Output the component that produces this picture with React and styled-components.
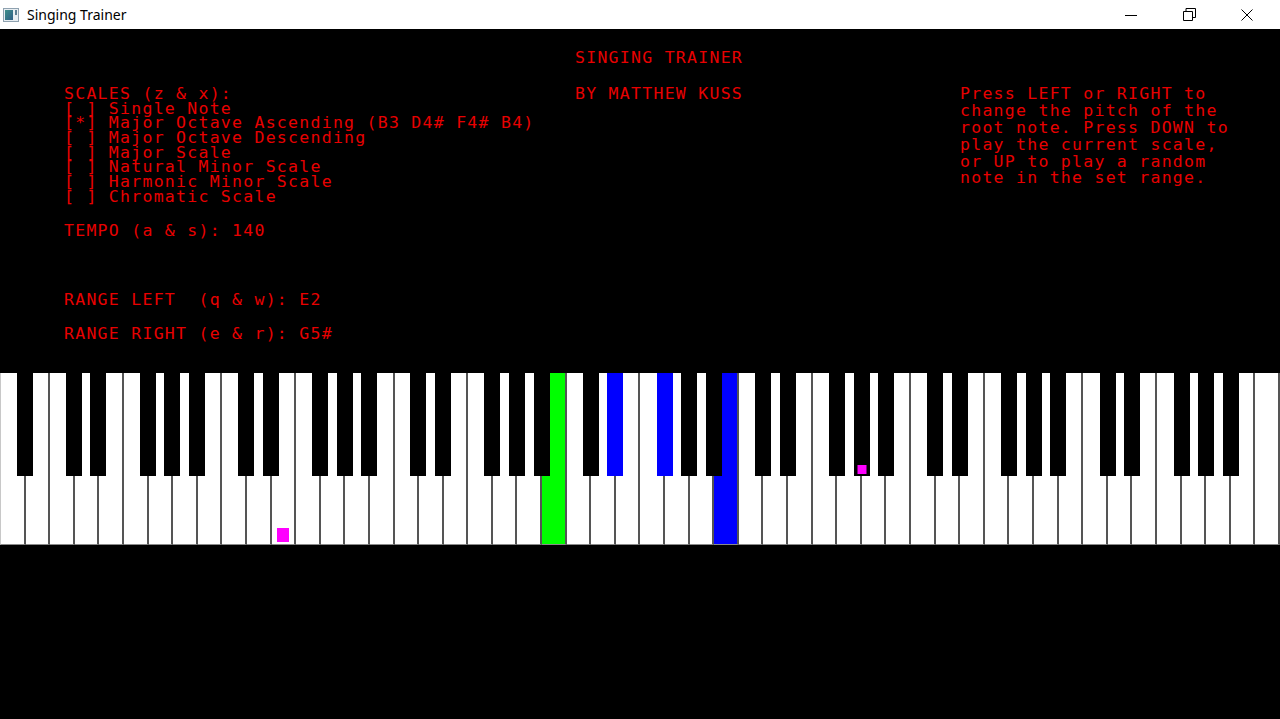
import styled, { createGlobalStyle } from 'styled-components';

const GlobalStyle = createGlobalStyle`
    * { box-sizing: border-box; }
    html, body { margin: 0; padding: 0; background: #000; }
`;

const Window = styled.div`
    width: 1280px;
    height: 719px;
    display: flex;
    flex-direction: column;
    overflow: hidden;
    background: #000;
`;

const TitleBar = styled.div`
    height: 29px;
    flex-shrink: 0;
    background: #fff;
    display: flex;
    align-items: center;
    padding-left: 3px;
    padding-right: 4px;
    font-family: 'Noto Sans', 'Open Sans', sans-serif;
    font-size: 14px;
    color: #000;
`;

const AppIcon = styled.svg`
    width: 16px;
    height: 16px;
    margin-right: 8px;
    margin-top: 1px;
`;

const Title = styled.span`
    flex: 1;
    margin-top: -1px;
`;

const ControlButton = styled.div`
    width: 58px;
    height: 29px;
    display: flex;
    align-items: center;
    justify-content: center;
`;

const Screen = styled.div`
    flex: 1;
    display: flex;
    flex-direction: column;
    padding-top: 12px;
    color: #e80000;
    font-family: 'DejaVu Sans Mono', 'Liberation Mono', monospace;
    font-size: 16.5px;
    letter-spacing: 1.27px;
    white-space: pre;
`;

const Header = styled.div`
    display: grid;
    grid-template-columns: 511px 385px 1fr;
    padding-left: 64px;
    align-items: start;
`;

const Column = styled.div`
    display: flex;
    flex-direction: column;
    padding-top: ${(p) => p.$offset || 0}px;
`;

const Line = styled.div`
    line-height: ${(p) => p.$lh}px;
    height: ${(p) => p.$lh}px;
    margin-top: ${(p) => p.$mt || 0}px;
`;

const Settings = styled.div`
    margin-top: ${(p) => p.$gap}px;
`;

const Keyboard = styled.div`
    position: relative;
    display: flex;
    height: 172px;
    margin-top: 22px;
`;

const WhiteKey = styled.div`
    position: relative;
    flex: 1;
    background: ${(p) => p.$color || '#fff'};
    border-right: 2px solid #555;
    border-bottom: 1px solid #8a8a8a;
    &:first-child {
        border-left: 1px solid #c8c8c8;
    }
`;

const BlackKey = styled.div`
    position: absolute;
    top: 0;
    left: calc(${(p) => p.$slot} * 100% / 52 - 8px);
    width: 16px;
    height: 103px;
    background: ${(p) => p.$color || '#000'};
`;

const Marker = styled.div`
    position: absolute;
    left: 50%;
    bottom: 2px;
    transform: translateX(-50%);
    width: ${(p) => p.$w}px;
    height: ${(p) => p.$h}px;
    background: #ff00ff;
`;

const NAMES = ['A', 'B', 'C', 'D', 'E', 'F', 'G'];
const WHITE_KEYS = 52;

// white key index from A0; black key slot = boundary index between white keys
const whiteColors = { 22: '#00ff00', 29: '#0000ff' };
const blackColors = { 25: '#0000ff', 27: '#0000ff' };
const whiteMarker = 11; // E2
const blackMarker = 35; // G5#

const scales = [
    ['[ ]', 'Single Note'],
    ['[*]', 'Major Octave Ascending (B3 D4# F4# B4)'],
    ['[ ]', 'Major Octave Descending'],
    ['[ ]', 'Major Scale'],
    ['[ ]', 'Natural Minor Scale'],
    ['[ ]', 'Harmonic Minor Scale'],
    ['[ ]', 'Chromatic Scale'],
];

const help = [
    'Press LEFT or RIGHT to',
    'change the pitch of the',
    'root note. Press DOWN to',
    'play the current scale,',
    'or UP to play a random',
    'note in the set range.',
];

function Piano() {
    const slots = [];
    for (let i = 0; i < WHITE_KEYS - 1; i++) {
        if ('ACDFG'.includes(NAMES[i % 7])) slots.push(i + 1);
    }
    return (
        <Keyboard>
            {Array.from({ length: WHITE_KEYS }, (_, i) => (
                <WhiteKey key={i} $color={whiteColors[i]}>
                    {i === whiteMarker && <Marker $w={12} $h={14} />}
                </WhiteKey>
            ))}
            {slots.map((s) => (
                <BlackKey key={'b' + s} $slot={s} $color={blackColors[s]}>
                    {s === blackMarker && <Marker $w={9} $h={9} />}
                </BlackKey>
            ))}
        </Keyboard>
    );
}

function App() {
    return (
        <Window>
            <GlobalStyle />
            <TitleBar>
                <AppIcon viewBox='0 0 16 16'>
                    <defs>
                        <linearGradient id='ic' x1='0' y1='0' x2='1' y2='1'>
                            <stop offset='0' stopColor='#3f8f8a' />
                            <stop offset='1' stopColor='#2e5f86' />
                        </linearGradient>
                    </defs>
                    <rect x='0.5' y='1.5' width='15' height='13' fill='#e8eef2' stroke='#8fa2b0' />
                    <rect x='2' y='3' width='8' height='10' fill='url(#ic)' />
                    <rect x='12' y='3' width='2' height='5' fill='#5c7f93' />
                </AppIcon>
                <Title>Singing Trainer</Title>
                <ControlButton>
                    <svg width='12' height='12' viewBox='0 0 12 12'>
                        <path d='M0 6.5H12' stroke='#000' strokeWidth='1' />
                    </svg>
                </ControlButton>
                <ControlButton>
                    <svg width='13' height='13' viewBox='0 0 13 13'>
                        <path d='M0.5 3.5h9v9h-9z M3 3.5V0.5h9.5v9h-3' fill='none' stroke='#000' strokeWidth='1' />
                    </svg>
                </ControlButton>
                <ControlButton>
                    <svg width='12' height='12' viewBox='0 0 12 12'>
                        <path d='M0.5 0.5L11.5 11.5M11.5 0.5L0.5 11.5' stroke='#000' strokeWidth='1' />
                    </svg>
                </ControlButton>
            </TitleBar>
            <Screen>
                <Header>
                    <Column $offset={46}>
                        <Line $lh={14.7}>SCALES (z & x):</Line>
                        {scales.map(([box, name]) => (
                            <Line key={name} $lh={14.7}>
                                {box + ' ' + name}
                            </Line>
                        ))}
                        <Settings $gap={9.2}>
                            <Line $lh={34}>TEMPO (a & s): 140</Line>
                        </Settings>
                        <Settings $gap={35}>
                            <Line $lh={34}>RANGE LEFT  (q & w): E2</Line>
                            <Line $lh={34}>RANGE RIGHT (e & r): G5#</Line>
                        </Settings>
                    </Column>
                    <Column>
                        <Line $lh={34}>SINGING TRAINER</Line>
                        <Line $lh={34} $mt={2}>BY MATTHEW KUSS</Line>
                    </Column>
                    <Column $offset={45}>
                        {help.map((t) => (
                            <Line key={t} $lh={16.9}>
                                {t}
                            </Line>
                        ))}
                    </Column>
                </Header>
                <Piano />
            </Screen>
        </Window>
    );
}

export default App;
